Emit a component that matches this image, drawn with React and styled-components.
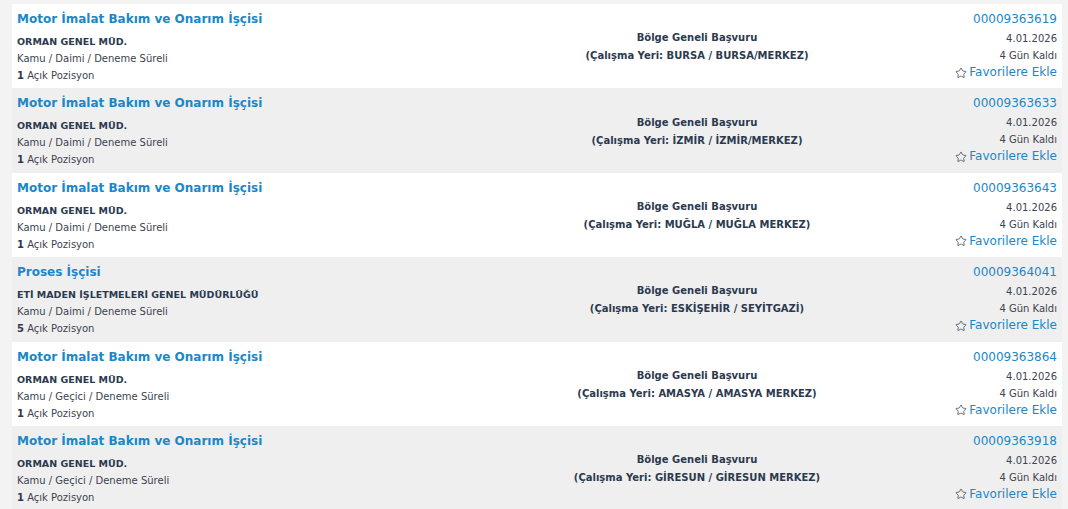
import React from 'react'
import styled, { createGlobalStyle } from 'styled-components'
import { Star } from 'lucide-react'

const GlobalStyle = createGlobalStyle`
  html, body {
    margin: 0;
    padding: 0;
    background: #f3f3f3;
    font-family: Tahoma, "DejaVu Sans", Verdana, sans-serif;
  }
`

const List = styled.div`
  display: flex;
  flex-direction: column;
  padding: 4px 6px 0 12px;
`

const Row = styled.div`
  display: grid;
  grid-template-columns: 530px 300px 1fr;
  height: 84.4px;
  box-sizing: border-box;
  padding: 3px 5px 0 5px;
  background: ${props => (props.striped ? '#efefef' : '#ffffff')};
`

const Left = styled.div`
  display: flex;
  flex-direction: column;
`

const Title = styled.a`
  margin-top: 1px;
  font-size: 12px;
  font-weight: bold;
  color: #1b87c9;
  line-height: 23px;
  text-decoration: none;
`

const Company = styled.div`
  margin-top: 1px;
  font-size: 9.5px;
  font-weight: bold;
  color: #2c3a4f;
  line-height: 19px;
`

const Meta = styled.div`
  font-size: 10px;
  color: #3c4450;
  line-height: ${props => props.lh || 17}px;

  b {
    color: #2c3a4f;
  }
`

const Center = styled.div`
  align-self: center;
  text-align: center;
  font-size: 10px;
  font-weight: bold;
  color: #2c3a4f;
  line-height: 18px;
  margin-top: -1px;
`

const Right = styled.div`
  display: flex;
  flex-direction: column;
  align-items: flex-end;
  padding-top: 2px;
`

const Code = styled.a`
  font-size: 12px;
  color: #1b87c9;
  line-height: 21px;
  text-decoration: none;
`

const Small = styled.div`
  font-size: 10px;
  color: #3c4450;
  line-height: ${props => props.lh}px;
`

const Fav = styled.a`
  display: flex;
  align-items: center;
  gap: 2px;
  font-size: 12px;
  color: #1b87c9;
  line-height: 17px;
  text-decoration: none;

  svg {
    color: #3c4a5a;
  }
`

const jobs = [
  { title: 'Motor İmalat Bakım ve Onarım İşçisi', org: 'ORMAN GENEL MÜD.', kind: 'Kamu / Daimi / Deneme Süreli', count: 1, place: 'BURSA / BURSA/MERKEZ', code: '00009363619' },
  { title: 'Motor İmalat Bakım ve Onarım İşçisi', org: 'ORMAN GENEL MÜD.', kind: 'Kamu / Daimi / Deneme Süreli', count: 1, place: 'İZMİR / İZMİR/MERKEZ', code: '00009363633' },
  { title: 'Motor İmalat Bakım ve Onarım İşçisi', org: 'ORMAN GENEL MÜD.', kind: 'Kamu / Daimi / Deneme Süreli', count: 1, place: 'MUĞLA / MUĞLA MERKEZ', code: '00009363643' },
  { title: 'Proses İşçisi', org: 'ETİ MADEN İŞLETMELERİ GENEL MÜDÜRLÜĞÜ', kind: 'Kamu / Daimi / Deneme Süreli', count: 5, place: 'ESKİŞEHİR / SEYİTGAZİ', code: '00009364041' },
  { title: 'Motor İmalat Bakım ve Onarım İşçisi', org: 'ORMAN GENEL MÜD.', kind: 'Kamu / Geçici / Deneme Süreli', count: 1, place: 'AMASYA / AMASYA MERKEZ', code: '00009363864' },
  { title: 'Motor İmalat Bakım ve Onarım İşçisi', org: 'ORMAN GENEL MÜD.', kind: 'Kamu / Geçici / Deneme Süreli', count: 1, place: 'GİRESUN / GİRESUN MERKEZ', code: '00009363918' }
]

const App = () => (
  <>
    <GlobalStyle />
    <List>
      {jobs.map((job, i) => (
        <Row key={job.code} striped={i % 2 === 1}>
          <Left>
            <Title href="#">{job.title}</Title>
            <Company>{job.org}</Company>
            <Meta lh={16}>{job.kind}</Meta>
            <Meta lh={17}>
              <b>{job.count}</b> Açık Pozisyon
            </Meta>
          </Left>
          <Center>
            <div>Bölge Geneli Başvuru</div>
            <div>(Çalışma Yeri: {job.place})</div>
          </Center>
          <Right>
            <Code href="#">{job.code}</Code>
            <Small lh={17}>4.01.2026</Small>
            <Small lh={17}>4 Gün Kaldı</Small>
            <Fav href="#">
              <Star size={12} strokeWidth={1.6} />
              Favorilere Ekle
            </Fav>
          </Right>
        </Row>
      ))}
    </List>
  </>
)

export default App
